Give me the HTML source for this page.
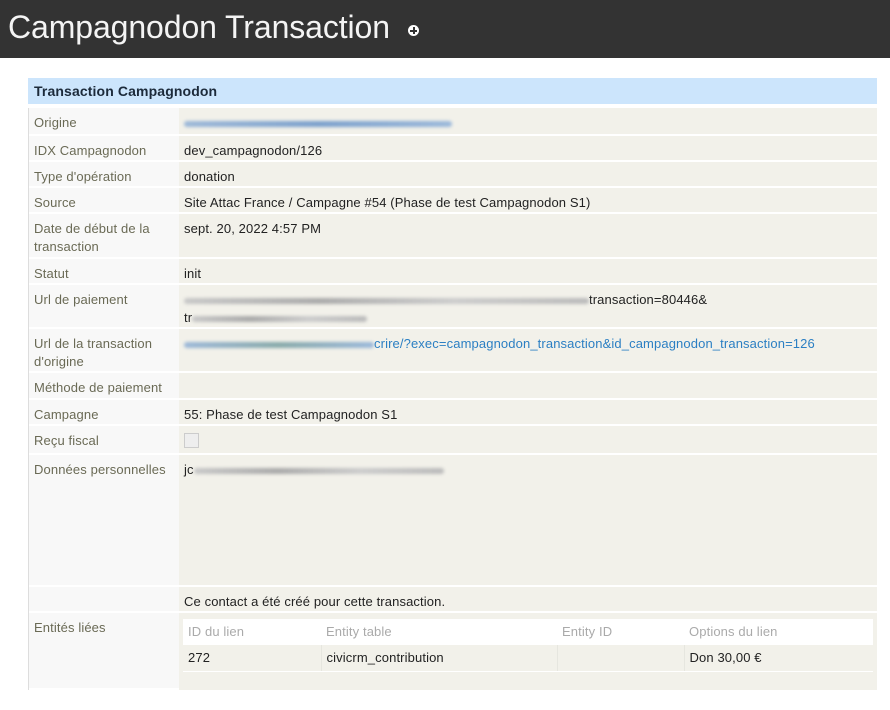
<!DOCTYPE html>
<html><head><meta charset="utf-8"><style>
*{margin:0;padding:0;box-sizing:border-box}
body{width:890px;height:710px;background:#fff;font-family:"Liberation Sans",sans-serif;font-size:13px;color:#222;position:relative;overflow:hidden;letter-spacing:0.12px}
.hdr{position:absolute;left:0;top:0;width:890px;height:58px;background:#333}
.hdr h1{position:absolute;left:8px;top:9px;font-weight:normal;font-size:32px;color:#f4f4f4;letter-spacing:-0.1px}
.plus{position:absolute;left:408px;top:25px;width:11px;height:11px;border-radius:50%;background:#fff}
.plus:before{content:"";position:absolute;left:2px;top:4.5px;width:7px;height:2px;background:#333}
.plus:after{content:"";position:absolute;left:4.5px;top:2px;width:2px;height:7px;background:#333}
.cap{position:absolute;left:28px;top:78px;width:849px;height:26px;background:#cce5fc;font-weight:bold;font-size:14px;color:#1c2a3a;padding:5px 6px}
.row{position:absolute;left:28px;width:849px;border-left:1px solid #ddd}
.l{position:absolute;left:0;top:0;bottom:2px;width:150px;background:#f8f8f8;color:#6a6a55;padding:6px 5px;line-height:18px}
.v{position:absolute;left:150px;top:0;bottom:2px;right:0;background:#f2f1ea;padding:6px 5px;line-height:18px}
.blur{display:inline-block;height:6px;background:linear-gradient(90deg,#c8c8c8,#aaa,#ccc,#bbb);border-radius:3px;vertical-align:middle;filter:blur(1.5px)}
a{color:#2b7fc3;text-decoration:none}
.cb{display:inline-block;width:15px;height:15px;border:1px solid #ccc;background:#eee;margin-top:1px}
table{border-collapse:collapse;position:absolute;left:4px;top:6px;width:690px}
th{background:#fff;color:#aaa;font-weight:normal;text-align:left;height:26px;padding:0 5px}
td{height:26px;padding:0 5px;border-right:1px solid #e6e6df;background:#f2f1ea;border-bottom:1px solid #fff}
</style></head><body>
<div class="hdr"><h1>Campagnodon Transaction</h1><div class="plus"></div></div>
<div class="cap">Transaction Campagnodon</div>

<div class="row" style="top:108px;height:28px"><div class="l">Origine</div><div class="v"><span class="blur" style="width:268px;background:linear-gradient(90deg,#9db8d8,#7ba0cc,#9bb8da)"></span></div></div>
<div class="row" style="top:136px;height:26px"><div class="l">IDX Campagnodon</div><div class="v">dev_campagnodon/126</div></div>
<div class="row" style="top:162px;height:26px"><div class="l">Type d'opération</div><div class="v">donation</div></div>
<div class="row" style="top:188px;height:26px"><div class="l">Source</div><div class="v">Site Attac France / Campagne #54 (Phase de test Campagnodon S1)</div></div>
<div class="row" style="top:214px;height:45px"><div class="l">Date de début de la transaction</div><div class="v">sept. 20, 2022 4:57 PM</div></div>
<div class="row" style="top:259px;height:26px"><div class="l">Statut</div><div class="v">init</div></div>
<div class="row" style="top:285px;height:44px"><div class="l">Url de paiement</div><div class="v"><span class="blur" style="width:405px"></span>transaction=80446&amp;<br>tr<span class="blur" style="width:175px"></span></div></div>
<div class="row" style="top:329px;height:44px"><div class="l">Url de la transaction d'origine</div><div class="v"><a><span class="blur" style="width:190px;background:linear-gradient(90deg,#9db8d8,#8aa,#9bb8da)"></span>crire/?exec=campagnodon_transaction&amp;id_campagnodon_transaction=126</a></div></div>
<div class="row" style="top:373px;height:27px"><div class="l">Méthode de paiement</div><div class="v"></div></div>
<div class="row" style="top:400px;height:26px"><div class="l">Campagne</div><div class="v">55: Phase de test Campagnodon S1</div></div>
<div class="row" style="top:426px;height:29px"><div class="l">Reçu fiscal</div><div class="v"><span class="cb"></span></div></div>
<div class="row" style="top:455px;height:132px"><div class="l">Données personnelles</div><div class="v">jc<span class="blur" style="width:250px"></span></div></div>
<div class="row" style="top:587px;height:26px"><div class="l"></div><div class="v">Ce contact a été créé pour cette transaction.</div></div>
<div class="row" style="top:613px;height:77px"><div class="l">Entités liées</div><div class="v" style="bottom:0">
<table><tr><th style="width:138px">ID du lien</th><th style="width:236px">Entity table</th><th style="width:127px">Entity ID</th><th>Options du lien</th></tr>
<tr><td>272</td><td>civicrm_contribution</td><td></td><td style="border-right:none">Don 30,00 €</td></tr></table>
</div></div>
</body></html>
